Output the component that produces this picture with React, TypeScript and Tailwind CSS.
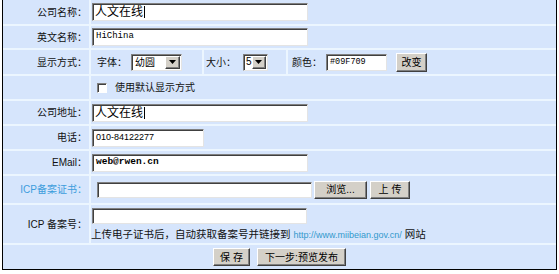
import React from 'react';

const cjk = "font-['Liberation_Sans','Noto_Sans_CJK_SC',sans-serif]";

const inset =
  'bg-white border border-t-[#808080] border-l-[#808080] border-r-[#e4e4e4] border-b-[#e4e4e4] shadow-[inset_1px_1px_0_#404040]';

const raised =
  'bg-[#d4d0c8] border border-t-white border-l-white border-r-[#404040] border-b-[#404040] shadow-[inset_-1px_-1px_0_#808080]';

const Label = ({ children, blue }: { children?: React.ReactNode; blue?: boolean }) => (
  <div
    className={`w-[86px] shrink-0 bg-[#d6e5fc] flex items-center justify-end pr-[2px] text-[10px] ${
      blue ? 'text-[#3d9ddc]' : 'text-[#111]'
    }`}
  >
    {children}
  </div>
);

const Row = ({ h, children }: { h: string; children: React.ReactNode }) => (
  <div className={`flex gap-[2px] ${h}`}>{children}</div>
);

const Cell = ({ children, className = '' }: { children?: React.ReactNode; className?: string }) => (
  <div className={`flex-1 bg-[#d6e5fc] flex items-center ${className}`}>{children}</div>
);

const BigText = ({ text }: { text: string }) => (
  <div className={`${inset} ml-[1px] w-[216px] h-[18px] flex items-center pl-[2px]`}>
    <span className="text-[12px] leading-none text-black">{text}</span>
    <span className="w-px h-[12px] bg-black ml-[1px]" />
  </div>
);

const Arrow = () => (
  <div className={`${raised} w-[15px] h-[13px] flex items-center justify-center`}>
    <svg width="7" height="4" viewBox="0 0 7 4">
      <path d="M0 0h7L3.5 4z" fill="#000" />
    </svg>
  </div>
);

const Btn = ({ children, className = '' }: { children: React.ReactNode; className?: string }) => (
  <div className={`${raised} h-[18px] flex items-center justify-center text-[10px] text-black ${className}`}>
    {children}
  </div>
);

export default function App() {
  return (
    <div className={`w-[559px] h-[274px] bg-white ${cjk}`}>
      <div className="ml-[2px] w-[555px] border-l border-r border-b border-black bg-[#ecf6ff] flex flex-col gap-[2px]">
        <Row h="h-[24px]">
          <Label>公司名称：</Label>
          <Cell>
            <BigText text="人文在线" />
          </Cell>
        </Row>

        <Row h="h-[22px]">
          <Label>英文名称：</Label>
          <Cell>
            <div className={`${inset} ml-[1px] w-[216px] h-[18px] flex items-center pl-[3px]`}>
              <span className="font-['Liberation_Mono',monospace] text-[9px] text-black">HiChina</span>
            </div>
          </Cell>
        </Row>

        <Row h="h-[24px]">
          <Label>显示方式：</Label>
          <div className="w-[111px] bg-[#d6e5fc] flex items-center pl-[6px] text-[10px] text-[#111]">
            <span>字体：</span>
            <div className={`${inset} ml-[4px] w-[51px] h-[17px] flex items-center justify-between pl-[3px] pr-[1px]`}>
              <span className="text-[10px] text-black">幼圆</span>
              <Arrow />
            </div>
          </div>
          <div className="w-[82px] bg-[#d6e5fc] flex items-center pl-[2px] text-[10px] text-[#111]">
            <span>大小：</span>
            <div className={`${inset} ml-[7px] w-[25px] h-[17px] flex items-center justify-between pl-[2px] pr-[1px]`}>
              <span className="text-[10px] leading-none text-black">5</span>
              <Arrow />
            </div>
          </div>
          <Cell className="pl-[4px] text-[10px] text-[#111]">
            <span>颜色：</span>
            <div className={`${inset} ml-[4px] w-[61px] h-[17px] flex items-center pl-[3px]`}>
              <span className="font-['Liberation_Mono',monospace] text-[8.5px] text-black">#09F709</span>
            </div>
            <Btn className="ml-[9px] w-[31px] h-[19px]">改变</Btn>
          </Cell>
        </Row>

        <Row h="h-[23px]">
          <Label />
          <Cell className="pl-[6px] text-[10px] text-[#111]">
            <div className="w-[10px] h-[10px] bg-white border border-t-[#808080] border-l-[#808080] border-r-white border-b-white shadow-[inset_1px_1px_0_#404040]" />
            <span className="ml-[8px]">使用默认显示方式</span>
          </Cell>
        </Row>

        <Row h="h-[23px]">
          <Label>公司地址：</Label>
          <Cell>
            <BigText text="人文在线" />
          </Cell>
        </Row>

        <Row h="h-[23px]">
          <Label>电话：</Label>
          <Cell>
            <div className={`${inset} ml-[1px] w-[112px] h-[18px] flex items-center pl-[3px]`}>
              <span className="font-['Liberation_Sans',sans-serif] text-[9px] text-black">010-84122277</span>
            </div>
          </Cell>
        </Row>

        <Row h="h-[23px]">
          <Label>EMail：</Label>
          <Cell>
            <div className={`${inset} ml-[1px] w-[216px] h-[18px] flex items-center pl-[3px]`}>
              <span className="font-['Liberation_Mono',monospace] text-[9.5px] font-bold text-black">web@rwen.cn</span>
            </div>
          </Cell>
        </Row>

        <Row h="h-[27px]">
          <Label blue>ICP备案证书：</Label>
          <Cell>
            <div className={`${inset} ml-[6px] w-[215px] h-[16px]`} />
            <Btn className="ml-[2px] w-[53px]">浏览...</Btn>
            <Btn className="ml-[3px] w-[40px]">上 传</Btn>
          </Cell>
        </Row>

        <Row h="h-[38px]">
          <Label>ICP 备案号：</Label>
          <Cell className="flex-col items-start justify-center pt-[1px]">
            <div className={`${inset} ml-[1px] w-[215px] h-[16px]`} />
            <div className="mt-[4px] text-[10.5px] leading-[12px] text-[#111] whitespace-nowrap">
              上传电子证书后，自动获取备案号并链接到{' '}
              <span className="font-['Liberation_Sans',sans-serif] text-[9px] text-[#3399cc]">
                http://www.miibeian.gov.cn/
              </span>{' '}
              网站
            </div>
          </Cell>
        </Row>

        <Row h="h-[24px]">
          <Cell className="justify-center gap-[7px]">
            <Btn className="w-[37px]">保 存</Btn>
            <Btn className="w-[89px]">下一步:预览发布</Btn>
          </Cell>
        </Row>
      </div>
    </div>
  );
}
